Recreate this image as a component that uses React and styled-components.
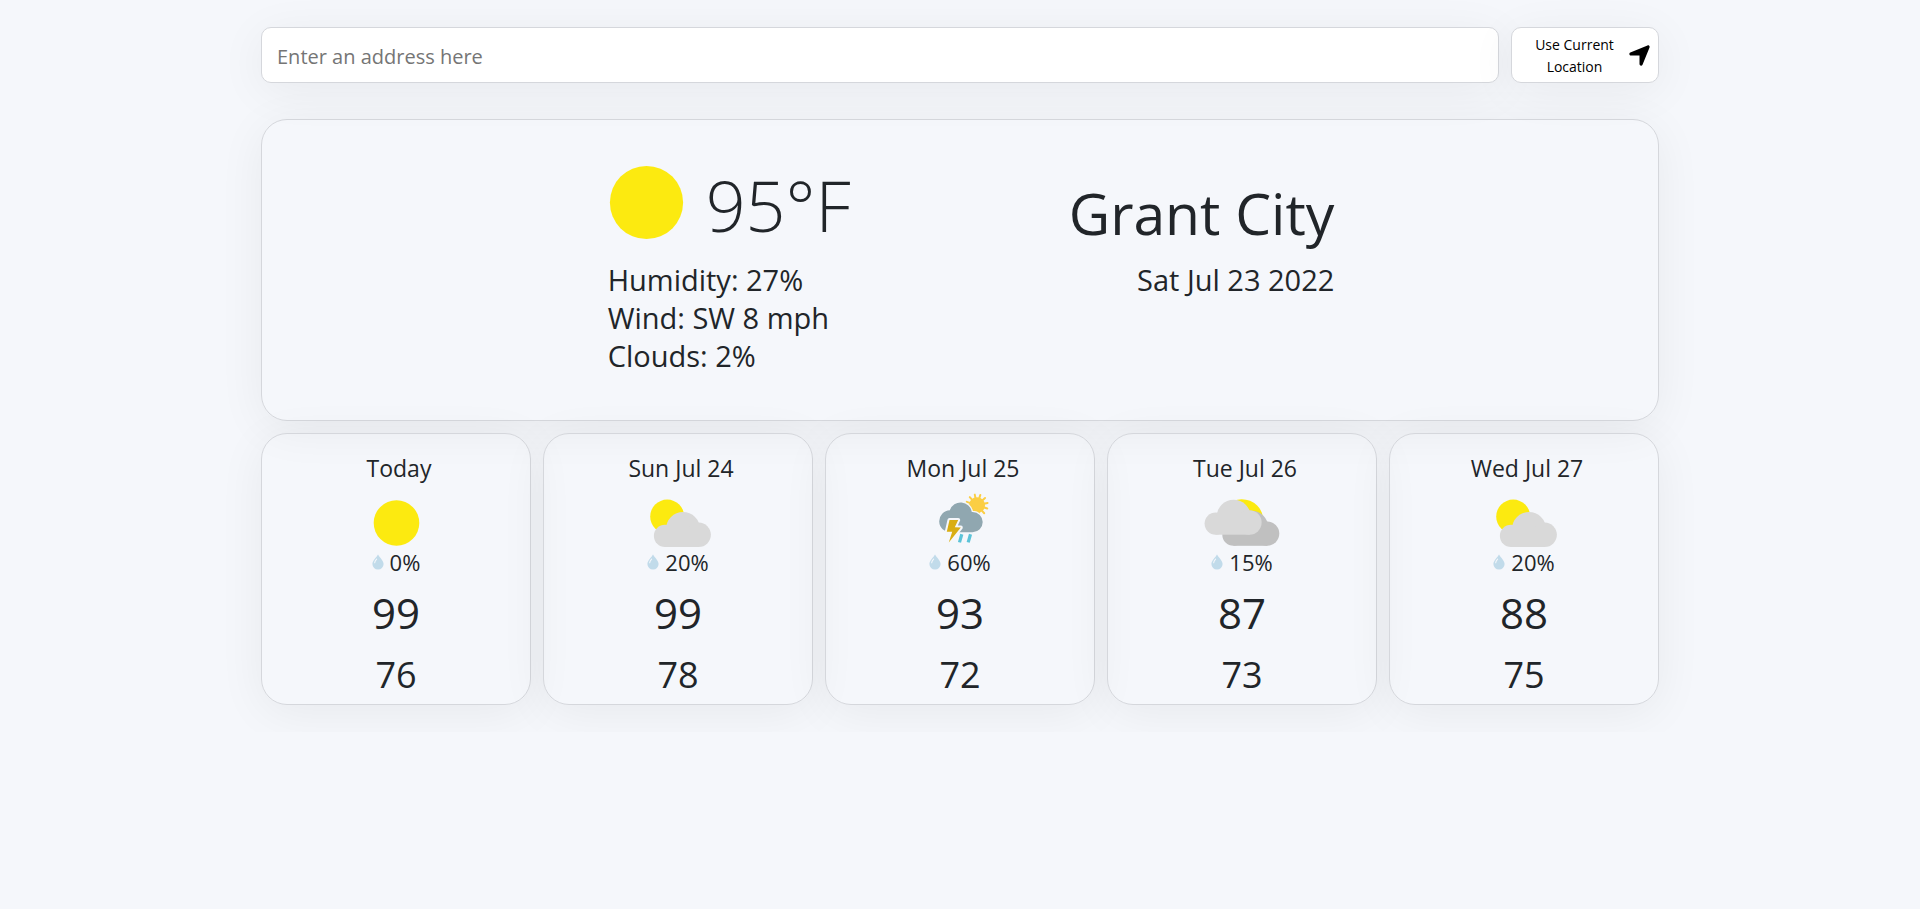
import React from "react";
import styled, { createGlobalStyle } from "styled-components";
import { FaLocationArrow } from "react-icons/fa6";

const GlobalStyle = createGlobalStyle`
  *, *::before, *::after { box-sizing: border-box; }
  body {
    margin: 0;
    background: #f5f7fb;
    color: #212529;
    font-family: "Segoe UI", "Open Sans", "Noto Sans", sans-serif;
  }
  h1, h2, p, ul { margin: 0; padding: 0; }
`;

const Page = styled.main`
  max-width: 1398px;
  margin: 0 auto;
  padding: 27px 0;
`;

const SearchBar = styled.form`
  display: flex;
  gap: 12px;
  margin-bottom: 36px;
`;

const surface = `
  border: 1px solid #d5d7dc;
  box-shadow: 0 8px 48px rgba(0, 0, 0, 0.06);
`;

const AddressInput = styled.input`
  ${surface}
  flex: 1;
  min-width: 0;
  height: 56px;
  padding: 2px 15px 0;
  border-radius: 10px;
  background: #fff;
  color: inherit;
  font: inherit;
  font-size: 20px;
  &::placeholder { color: #757575; opacity: 1; }
`;

const LocationButton = styled.button`
  ${surface}
  display: flex;
  align-items: center;
  width: 148px;
  padding: 0 6px 0 10px;
  border-radius: 10px;
  background: #fff;
  color: #000;
  font: inherit;
  font-size: 14px;
  line-height: 22px;
  cursor: pointer;
`;

const ButtonLabel = styled.span`
  flex: 1;
  padding: 2px 12px 0;
  text-align: center;
`;

const CurrentWeather = styled.section`
  ${surface}
  display: flex;
  justify-content: center;
  gap: 218px;
  margin-bottom: 12px;
  padding: 36px 0 45px 22px;
  border-radius: 26px;
`;

const Column = styled.div`
  text-align: ${(p) => p.$align || "left"};
`;

const Heading = styled.div`
  display: flex;
  align-items: ${(p) => p.$valign};
  gap: 22px;
  height: 94px;
  margin-bottom: 11px;
`;

const Temperature = styled.p`
  padding-top: 4px;
  font-size: 70px;
  font-weight: 300;
  line-height: 94px;
`;

const City = styled.h1`
  font-size: 57px;
  font-weight: 400;
  line-height: 74px;
`;

const Detail = styled.p`
  font-size: 29px;
  line-height: 38px;
`;

const Forecast = styled.ul`
  display: grid;
  grid-template-columns: repeat(5, 1fr);
  gap: 12px;
  list-style: none;
`;

const DayCard = styled.li`
  ${surface}
  display: flex;
  flex-direction: column;
  align-items: center;
  padding: 18px 0 5px;
  border-radius: 26px;
`;

const DayName = styled.h2`
  margin-bottom: 9px;
  padding-left: 6px;
  font-size: 23px;
  font-weight: 400;
  line-height: 32px;
`;

const DayIcon = styled.svg`
  display: block;
  width: 80px;
  height: 56px;
`;

const Rain = styled.p`
  display: flex;
  align-items: center;
  gap: 6px;
  font-size: 22px;
  line-height: 26px;
`;

const High = styled.p`
  margin-top: 10px;
  font-size: 42px;
  line-height: 56px;
`;

const Low = styled.p`
  margin-top: 10px;
  font-size: 36px;
  line-height: 48px;
`;

const Cloud = ({ x = 0, y = 0, fill = "#d9d9d9" }) => (
  <g transform={`translate(${x} ${y})`} fill={fill}>
    <circle cx="27" cy="42.9" r="11.1" />
    <circle cx="45" cy="36" r="17" />
    <circle cx="60.7" cy="41.8" r="12.2" />
    <rect x="27" y="36" width="34" height="18" />
  </g>
);

const SUN_RAYS = [-165, -135, -105, -75, -45, -15, 15, 45, 75].map((deg) => {
  const a = ((deg + 3) * Math.PI) / 180;
  return { deg, x: Math.cos(a), y: Math.sin(a) };
});

const drawings = {
  sunny: <circle cx="40.5" cy="30" r="22.8" fill="#fcea10" />,
  partly: (
    <>
      <circle cx="29.2" cy="23.6" r="17" fill="#fcea10" />
      <Cloud />
    </>
  ),
  mostly: (
    <>
      <circle cx="39.7" cy="28" r="21.8" fill="#fcea10" />
      <Cloud x={4.4} y={-1.2} fill="#c0c0c0" />
      <Cloud x={-13.3} y={-12.3} />
    </>
  ),
  storm: (
    <>
      <g fill="#fbce44" stroke="#fbce44" strokeWidth="2" strokeLinecap="round">
        <circle cx="57" cy="12.2" r="7" />
        {SUN_RAYS.map((r) => (
          <line
            key={r.deg}
            x1={57 + r.x * 6}
            y1={12.2 + r.y * 6}
            x2={57 + r.x * 10.8}
            y2={12.2 + r.y * 10.8}
          />
        ))}
      </g>
      <path
        d="M30.5 39.2a11 11 0 0 1-.6-22a11.3 11.3 0 0 1 21.9 1.8h.8a10.1 10.1 0 0 1 0 20.2z"
        fill="#90a7b0"
        stroke="#f5f7fb"
        strokeWidth="2.6"
        paintOrder="stroke"
      />
      <path
        d="M29.5 27h8.7l-3.4 7.2 6 .4-12 15 3.4-10.8h-5.4z"
        fill="#d9ae13"
        stroke="#f5f7fb"
        strokeWidth="4"
        strokeLinejoin="round"
        paintOrder="stroke"
      />
      <path
        d="M41.8 41.2l-2.3 8.2M50.5 41.2l-2.3 8.2"
        stroke="#5bc3d8"
        strokeWidth="3.2"
      />
    </>
  ),
};

const WeatherIcon = ({ kind }) => (
  <DayIcon viewBox="0 0 80 56" role="img" aria-label={kind}>
    {drawings[kind]}
  </DayIcon>
);

const Drop = () => (
  <svg width="12" height="16" viewBox="0 0 12 16" aria-hidden="true">
    <path
      d="M6 .4C7.4 3.2 11.6 6.6 11.6 10a5.6 5.5 0 0 1-11.2 0C.4 6.6 4.6 3.2 6 .4z"
      fill="#c1dbea"
    />
    <path
      d="M4.6 5.2Q2.8 7 2.7 8.8"
      fill="none"
      stroke="#f5f7fb"
      strokeWidth="1.1"
      strokeLinecap="round"
    />
  </svg>
);

const days = [
  { name: "Today", kind: "sunny", rain: "0%", high: 99, low: 76 },
  { name: "Sun Jul 24", kind: "partly", rain: "20%", high: 99, low: 78 },
  { name: "Mon Jul 25", kind: "storm", rain: "60%", high: 93, low: 72 },
  { name: "Tue Jul 26", kind: "mostly", rain: "15%", high: 87, low: 73 },
  { name: "Wed Jul 27", kind: "partly", rain: "20%", high: 88, low: 75 },
];

export default function App() {
  return (
    <>
      <GlobalStyle />
      <Page>
        <SearchBar onSubmit={(e) => e.preventDefault()}>
          <AddressInput
            type="text"
            aria-label="Address"
            placeholder="Enter an address here"
          />
          <LocationButton type="button">
            <ButtonLabel>Use Current Location</ButtonLabel>
            <FaLocationArrow size={25} aria-hidden="true" />
          </LocationButton>
        </SearchBar>

        <CurrentWeather>
          <Column>
            <Heading $valign="center">
              <svg width="76" height="76" viewBox="0 0 76 76" role="img" aria-label="sunny">
                <circle cx="38.5" cy="37.5" r="36.6" fill="#fcea10" />
              </svg>
              <Temperature>95°F</Temperature>
            </Heading>
            <Detail>Humidity: 27%</Detail>
            <Detail>Wind: SW 8 mph</Detail>
            <Detail>Clouds: 2%</Detail>
          </Column>
          <Column $align="right">
            <Heading $valign="flex-end">
              <City>Grant City</City>
            </Heading>
            <Detail>Sat Jul 23 2022</Detail>
          </Column>
        </CurrentWeather>

        <Forecast>
          {days.map((d) => (
            <DayCard key={d.name}>
              <DayName>{d.name}</DayName>
              <WeatherIcon kind={d.kind} />
              <Rain>
                <Drop />
                {d.rain}
              </Rain>
              <High>{d.high}</High>
              <Low>{d.low}</Low>
            </DayCard>
          ))}
        </Forecast>
      </Page>
    </>
  );
}
